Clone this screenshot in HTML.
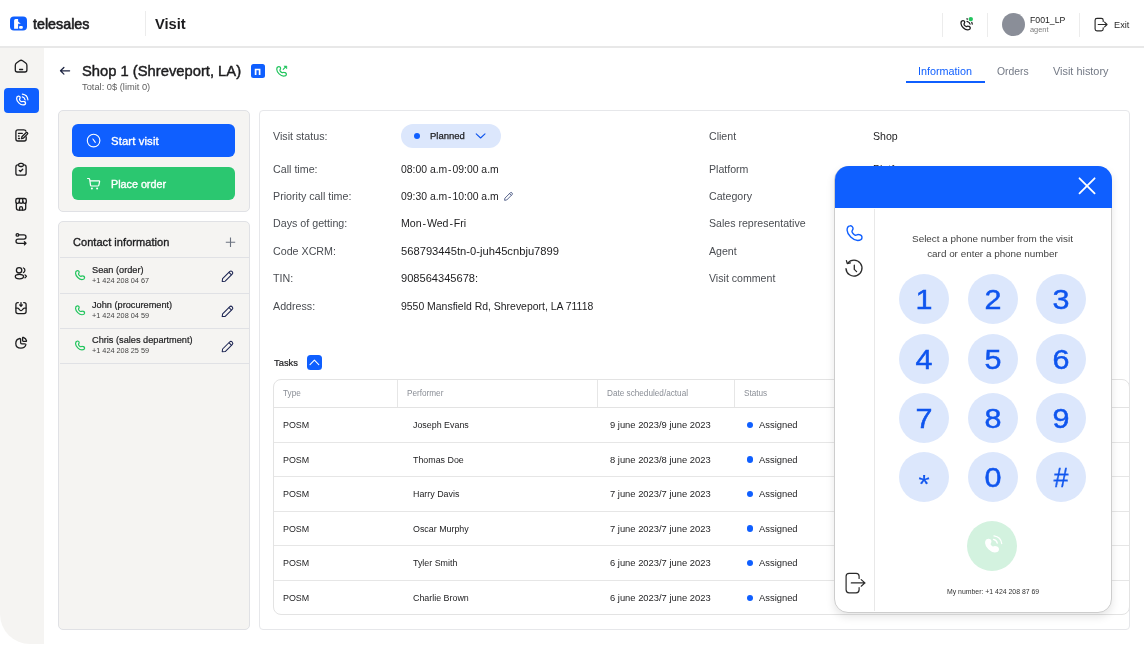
<!DOCTYPE html>
<html><head><meta charset="utf-8">
<style>
*{margin:0;padding:0;box-sizing:border-box}
html,body{width:1144px;height:654px;overflow:hidden;background:#fff;font-family:"Liberation Sans",sans-serif;color:#1d1d1f}
.t{will-change:transform}
.a{position:absolute}
.t{position:absolute;line-height:1;white-space:nowrap}
svg{position:absolute;overflow:visible}
</style></head><body>
<div class="a" style="left:0px;top:46px;width:1144px;height:1.5px;background:#e8e8e8;"></div>
<svg style="left:10px;top:16px" width="17" height="15" viewBox="10 16 17 15" fill="none" ><rect x="10" y="16.6" width="17" height="14" rx="4" fill="#0f5fff"/><path d="M14.1 28.8V20.6Q14.1 19.1 15.6 19.1H18.1V21.4L20.8 23.8H18.1V28.8Z" fill="#fff"/><rect x="19.1" y="26" width="3.7" height="2.8" rx="1" fill="#fff"/></svg>
<div class="t" style="left:33.2px;top:17.00px;font-size:14.3px;color:#1d1d1f;-webkit-text-stroke:0.6px #1d1d1f;">telesales</div>
<div class="a" style="left:145px;top:11px;width:1px;height:25px;background:#ececec;"></div>
<div class="t" style="left:155px;top:17.00px;font-size:14.7px;color:#1d1d1f;font-weight:bold;">Visit</div>
<div class="a" style="left:942px;top:12.5px;width:1px;height:24.5px;background:#ececec;"></div>
<div class="a" style="left:987px;top:12.5px;width:1px;height:24.5px;background:#ececec;"></div>
<div class="a" style="left:1079px;top:12.5px;width:1px;height:24.5px;background:#ececec;"></div>
<svg style="left:954px;top:12px" width="26" height="24" viewBox="954 12 26 24" fill="none" ><path d="M3.6 1.0C5.2 0.6 6.6 2.0 6.6 3.4C6.6 4.6 5.6 5.2 5.6 6.2C5.6 7.4 7.6 9.6 9.0 9.8C10.0 9.9 10.6 9.0 11.8 9.2C13.4 9.4 15.2 10.6 15.0 12.4C14.8 14.2 13.0 14.8 11.0 14.8C6.6 14.8 1.2 9.4 1.0 5.2C0.9 3.0 2.0 1.3 3.6 1.0Z" transform="translate(960.330 20.029) scale(0.6608)" stroke="#1d1d1f" stroke-width="1.892" fill="none"/><path d="M967 21.3Q969.6 21.9 970.1 24.2M966.8 18.9Q971.6 19.5 972.3 24.1" stroke="#1d1d1f" stroke-width="1.2" stroke-linecap="round"/><circle cx="970.8" cy="19.1" r="2.9" fill="#fff"/><circle cx="970.8" cy="19.1" r="2.2" fill="#22c55e"/></svg>
<div class="a" style="left:1002px;top:13px;width:23px;height:23px;background:#8a8e98;border-radius:50%"></div>
<div class="t" style="left:1030px;top:16.00px;font-size:8.7px;color:#222;">F001_LP</div>
<div class="t" style="left:1030px;top:26.00px;font-size:7.4px;color:#7d7d7d;">agent</div>
<svg style="left:1092px;top:16px" width="18" height="17" viewBox="1092 16 18 17" fill="none" ><path d="M1103.2 21.4V20.2Q1103.2 18.3 1101.3 18.3H1097Q1095.1 18.3 1095.1 20.2V28.9Q1095.1 30.8 1097 30.8H1101.3Q1103.2 30.8 1103.2 28.9V27.7" stroke="#2a2a2a" stroke-width="1.15" stroke-linecap="round" stroke-linejoin="round"/><path d="M1098.2 24.5H1106.8M1104.6 22.1L1107 24.5L1104.6 26.9" stroke="#2a2a2a" stroke-width="1.15" stroke-linecap="round" stroke-linejoin="round"/></svg>
<div class="t" style="left:1113.6px;top:21.00px;font-size:9.2px;color:#2a2a2a;">Exit</div>
<div class="a" style="left:0px;top:48px;width:44px;height:596px;background:#f5f4f2;border-bottom-left-radius:30px"></div>
<div class="a" style="left:4px;top:88px;width:35px;height:25px;background:#0f5fff;border-radius:4px"></div>
<svg style="left:12px;top:57px" width="18" height="18" viewBox="12 57 18 18" fill="none" ><path d="M15.3 65.4Q15.3 63.9 16.5 63L19.6 60.8Q21.1 59.7 22.6 60.8L25.7 63Q26.9 63.9 26.9 65.4V70Q26.9 72 24.9 72H17.3Q15.3 72 15.3 70Z" stroke="#1d1d1f" stroke-width="1.3" stroke-linecap="round" stroke-linejoin="round"/><path d="M19.6 69.5H22.6" stroke="#1d1d1f" stroke-width="1.3" stroke-linecap="round" stroke-linejoin="round"/></svg>
<svg style="left:12px;top:91px" width="18" height="18" viewBox="12 91 18 18" fill="none" ><path d="M3.6 1.0C5.2 0.6 6.6 2.0 6.6 3.4C6.6 4.6 5.6 5.2 5.6 6.2C5.6 7.4 7.6 9.6 9.0 9.8C10.0 9.9 10.6 9.0 11.8 9.2C13.4 9.4 15.2 10.6 15.0 12.4C14.8 14.2 13.0 14.8 11.0 14.8C6.6 14.8 1.2 9.4 1.0 5.2C0.9 3.0 2.0 1.3 3.6 1.0Z" transform="translate(15.949 95.445) scale(0.6396)" stroke="#fff" stroke-width="1.954" fill="none"/><path d="M22.3 96.9Q24.6 97.4 25.1 99.8M22.4 94.2Q27.3 94.8 27.9 99.8" stroke="#fff" stroke-width="1.2" stroke-linecap="round"/></svg>
<svg style="left:12px;top:126px" width="18" height="18" viewBox="12 126 18 18" fill="none" ><path d="M26.2 136.8V139Q26.2 141 24.2 141H17.9Q15.9 141 15.9 139V131.8Q15.9 129.8 17.9 129.8H23.8Q25.6 129.8 26 131.2" stroke="#1d1d1f" stroke-width="1.3" stroke-linecap="round" stroke-linejoin="round"/><path d="M18.5 133.4H22.3M18.5 136H19.1M18.5 138.5H19.6" stroke="#1d1d1f" stroke-width="1.3" stroke-linecap="round" stroke-linejoin="round"/><path d="M21.6 138.7L21.9 136.8L26 132.7Q26.7 132 27.4 132.7Q28.1 133.4 27.4 134.1L23.3 138.2Z" stroke="#1d1d1f" stroke-width="1.3" stroke-linecap="round" stroke-linejoin="round"/></svg>
<svg style="left:12px;top:160px" width="18" height="18" viewBox="12 160 18 18" fill="none" ><path d="M18.4 164.9H17.9Q15.9 164.9 15.9 166.9V173.2Q15.9 175.2 17.9 175.2H24.1Q26.1 175.2 26.1 173.2V166.9Q26.1 164.9 24.1 164.9H23.6" stroke="#1d1d1f" stroke-width="1.3" stroke-linecap="round" stroke-linejoin="round"/><rect x="18.6" y="163.4" width="4.8" height="3.1" rx="1.5" stroke="#1d1d1f" stroke-width="1.3" stroke-linecap="round" stroke-linejoin="round"/><path d="M19.3 170.4L20.5 171.5L22.7 169.2" stroke="#1d1d1f" stroke-width="1.3" stroke-linecap="round" stroke-linejoin="round"/></svg>
<svg style="left:12px;top:195px" width="18" height="18" viewBox="12 195 18 18" fill="none" ><path d="M15.8 201.4Q15.8 203.4 17.5 203.4Q19.2 203.4 19.3 201.4Q19.4 203.4 21.1 203.4Q22.8 203.4 22.9 201.4Q23 203.4 24.7 203.4Q26.3 203.4 26.3 201.4V200.2Q26.3 198.5 24.6 198.5H17.5Q15.8 198.5 15.8 200.2Z" stroke="#1d1d1f" stroke-width="1.3" stroke-linecap="round" stroke-linejoin="round"/><path d="M19.3 201.4L19.6 198.6M22.9 201.4L22.6 198.6" stroke="#1d1d1f" stroke-width="1.3" stroke-linecap="round" stroke-linejoin="round"/><path d="M16.4 203.2V208Q16.4 210.1 18.4 210.1H23.7Q25.7 210.1 25.7 208V203.2" stroke="#1d1d1f" stroke-width="1.3" stroke-linecap="round" stroke-linejoin="round"/><path d="M19.6 210V208.1Q19.6 206.7 21.05 206.7Q22.5 206.7 22.5 208.1V210" stroke="#1d1d1f" stroke-width="1.3" stroke-linecap="round" stroke-linejoin="round"/></svg>
<svg style="left:12px;top:230px" width="18" height="18" viewBox="12 230 18 18" fill="none" ><circle cx="17.4" cy="234.9" r="1.3" stroke="#1d1d1f" stroke-width="1.3" stroke-linecap="round" stroke-linejoin="round"/><path d="M18.9 234.9H23.9Q26 234.9 26 237Q26 239.1 23.9 239.1H18.1Q16 239.1 16 241.2Q16 243.3 18.1 243.3H25.9M24.4 241.7L26 243.3L24.4 244.9" stroke="#1d1d1f" stroke-width="1.3" stroke-linecap="round" stroke-linejoin="round"/></svg>
<svg style="left:12px;top:264px" width="18" height="18" viewBox="12 264 18 18" fill="none" ><circle cx="19.1" cy="270.3" r="2.7" stroke="#1d1d1f" stroke-width="1.3" stroke-linecap="round" stroke-linejoin="round"/><path d="M23.4 268Q24.9 268.5 24.9 270.3Q24.9 272.1 23.4 272.6" stroke="#1d1d1f" stroke-width="1.3" stroke-linecap="round" stroke-linejoin="round"/><ellipse cx="19.4" cy="276.6" rx="4.1" ry="2.2" stroke="#1d1d1f" stroke-width="1.3" stroke-linecap="round" stroke-linejoin="round"/><path d="M25 274.9L26.4 276.3L25 277.7" stroke="#1d1d1f" stroke-width="1.3" stroke-linecap="round" stroke-linejoin="round"/></svg>
<svg style="left:12px;top:299px" width="18" height="18" viewBox="12 299 18 18" fill="none" ><path d="M18.3 302.6H17.9Q15.9 302.6 15.9 304.6V311.6Q15.9 313.6 17.9 313.6H24.1Q26.1 313.6 26.1 311.6V304.6Q26.1 302.6 24.1 302.6H23.7" stroke="#1d1d1f" stroke-width="1.3" stroke-linecap="round" stroke-linejoin="round"/><path d="M21 302.7V306.1M19.7 304.9L21 306.2L22.3 304.9" stroke="#1d1d1f" stroke-width="1.3" stroke-linecap="round" stroke-linejoin="round"/><path d="M16 308.1H17.5Q18.2 308.1 18.7 308.7L20 310.1Q21 311.1 22 310.1L23.3 308.7Q23.8 308.1 24.5 308.1H26" stroke="#1d1d1f" stroke-width="1.3" stroke-linecap="round" stroke-linejoin="round"/></svg>
<svg style="left:12px;top:333px" width="18" height="18" viewBox="12 333 18 18" fill="none" ><path d="M19.8 338.5Q15.8 339.2 15.8 343.4Q15.8 348.1 20.9 348.1Q25 348.1 25.8 344.9Q26 343.8 24.8 343.8H21.8Q20.6 343.8 20.6 342.6V339.2Q20.6 338.4 19.8 338.5Z" stroke="#1d1d1f" stroke-width="1.3" stroke-linecap="round" stroke-linejoin="round"/><path d="M22.6 337.9V340.6Q22.6 341.4 23.4 341.4H25.9Q26.6 341.4 26.5 340.7Q26 338.4 23.4 337.4Q22.6 337.1 22.6 337.9Z" stroke="#1d1d1f" stroke-width="1.3" stroke-linecap="round" stroke-linejoin="round"/></svg>
<svg style="left:57px;top:64px" width="15" height="14" viewBox="57 64 15 14" fill="none" ><path d="M60.8 70.8H69.6M63.9 67.5L60.5 70.8L63.9 74.1" stroke="#1c2340" stroke-width="1.25" stroke-linecap="round" stroke-linejoin="round"/></svg>
<div class="t" style="left:82.3px;top:64.00px;font-size:14.75px;color:#1d1d1f;-webkit-text-stroke:0.45px #1d1d1f;">Shop 1 (Shreveport, LA)</div>
<div class="t" style="left:82.3px;top:83.00px;font-size:9.3px;color:#5f5f5f;">Total: 0$ (limit 0)</div>
<div class="a" style="left:250.6px;top:63.8px;width:14.3px;height:13.9px;background:#0f5fff;border-radius:2.5px"></div>
<svg style="left:250px;top:63px" width="16" height="16" viewBox="250 63 16 16" fill="none" ><path d="M255.6 74.9V69.5H259.6V74.9" stroke="#fff" stroke-width="1.7"/></svg>
<svg style="left:272px;top:62px" width="18" height="17" viewBox="272 62 18 17" fill="none" ><path d="M3.6 1.0C5.2 0.6 6.6 2.0 6.6 3.4C6.6 4.6 5.6 5.2 5.6 6.2C5.6 7.4 7.6 9.6 9.0 9.8C10.0 9.9 10.6 9.0 11.8 9.2C13.4 9.4 15.2 10.6 15.0 12.4C14.8 14.2 13.0 14.8 11.0 14.8C6.6 14.8 1.2 9.4 1.0 5.2C0.9 3.0 2.0 1.3 3.6 1.0Z" transform="translate(276.083 65.986) scale(0.6855)" stroke="#22c55e" stroke-width="1.751" fill="none"/><path d="M283.2 69.4L285.4 67.2" stroke="#22c55e" stroke-width="1.1" stroke-linecap="round"/><path d="M283.9 66H286.8V68.9Z" fill="#22c55e" stroke="#22c55e" stroke-width="0.5" stroke-linejoin="round"/></svg>
<div class="t" style="left:918.3px;top:66.00px;font-size:10.8px;color:#0f5fff;">Information</div>
<div class="t" style="left:996.7px;top:67.00px;font-size:10.4px;color:#737985;">Orders</div>
<div class="t" style="left:1052.8px;top:66.00px;font-size:10.9px;color:#737985;">Visit history</div>
<div class="a" style="left:906px;top:81.2px;width:79px;height:1.8px;background:#0f5fff;"></div>
<div class="a" style="left:58px;top:110px;width:192px;height:102px;background:#f5f4f2;border:1px solid #e0e1e5;border-radius:5px"></div>
<div class="a" style="left:72px;top:124px;width:163px;height:33px;background:#0f5fff;border-radius:6px"></div>
<svg style="left:85px;top:132px" width="18" height="18" viewBox="85 132 18 18" fill="none" ><circle cx="93.6" cy="140.6" r="6.3" stroke="#fff" stroke-width="1.1"/><path d="M92.9 139L95.3 142.4" stroke="#fff" stroke-width="1.1" stroke-linecap="round"/></svg>
<div class="t" style="left:110.6px;top:136.00px;font-size:11.3px;color:#fff;-webkit-text-stroke:0.35px #fff;letter-spacing:0.12px;">Start visit</div>
<div class="a" style="left:72px;top:167px;width:163px;height:33px;background:#2bc770;border-radius:6px"></div>
<svg style="left:85px;top:175px" width="18" height="18" viewBox="85 175 18 18" fill="none" ><path d="M87.6 178.5H88.6Q89.5 178.5 89.7 179.4L90.5 185.2Q90.6 186 91.4 186H97.9Q98.6 186 98.8 185.3L99.6 181.6Q99.7 180.8 98.9 180.8H90" stroke="#fff" stroke-width="1.2" stroke-linecap="round" stroke-linejoin="round"/><circle cx="91.9" cy="188.6" r="1" fill="#fff"/><circle cx="97.1" cy="188.6" r="1" fill="#fff"/></svg>
<div class="t" style="left:110.6px;top:179.00px;font-size:10.75px;color:#fff;-webkit-text-stroke:0.35px #fff;">Place order</div>
<div class="a" style="left:58px;top:221px;width:192px;height:409px;background:#f5f4f2;border:1px solid #e0e1e5;border-radius:5px"></div>
<div class="t" style="left:72.5px;top:237.00px;font-size:11px;color:#1d1d1f;-webkit-text-stroke:0.35px #1d1d1f;letter-spacing:0.05px;">Contact information</div>
<svg style="left:224px;top:236px" width="13" height="13" viewBox="224 236 13 13" fill="none" ><path d="M230.5 237.5V247M225.8 242.2H235.2" stroke="#6b7280" stroke-width="1.1"/></svg>
<div class="a" style="left:59.5px;top:257px;width:189px;height:1px;background:#e0e1e5;"></div>
<div class="a" style="left:59.5px;top:293px;width:189px;height:1px;background:#e0e1e5;"></div>
<div class="a" style="left:59.5px;top:328px;width:189px;height:1px;background:#e0e1e5;"></div>
<div class="a" style="left:59.5px;top:363px;width:189px;height:1px;background:#e0e1e5;"></div>
<div class="t" style="left:92.3px;top:266.00px;font-size:9.2px;color:#1d1d1f;-webkit-text-stroke:0.2px #1d1d1f;">Sean (order)</div>
<div class="t" style="left:92.3px;top:277.00px;font-size:7.3px;color:#444;">+1 424 208 04 67</div>
<svg style="left:72px;top:267px" width="16" height="16" viewBox="72 267 16 16" fill="none" ><path d="M3.6 1.0C5.2 0.6 6.6 2.0 6.6 3.4C6.6 4.6 5.6 5.2 5.6 6.2C5.6 7.4 7.6 9.6 9.0 9.8C10.0 9.9 10.6 9.0 11.8 9.2C13.4 9.4 15.2 10.6 15.0 12.4C14.8 14.2 13.0 14.8 11.0 14.8C6.6 14.8 1.2 9.4 1.0 5.2C0.9 3.0 2.0 1.3 3.6 1.0Z" transform="translate(74.921 270.018) scale(0.6431)" stroke="#22c55e" stroke-width="1.866" fill="none"/></svg>
<svg style="left:219px;top:266px" width="18" height="18" viewBox="219 266 18 18" fill="none" ><path d="M222.2 281.4L222.6 278.6L229.6 271.6Q230.9 270.3 232.2 271.6Q233.5 272.9 232.2 274.2L225.2 281.2Z" stroke="#1c2452" stroke-width="1.05" stroke-linejoin="round"/><path d="M228.9 272.3L231.5 274.9" stroke="#1c2452" stroke-width="1.05"/></svg>
<div class="t" style="left:92.3px;top:301.00px;font-size:9.2px;color:#1d1d1f;-webkit-text-stroke:0.2px #1d1d1f;">John (procurement)</div>
<div class="t" style="left:92.3px;top:312.00px;font-size:7.3px;color:#444;">+1 424 208 04 59</div>
<svg style="left:72px;top:302px" width="16" height="16" viewBox="72 302 16 16" fill="none" ><path d="M3.6 1.0C5.2 0.6 6.6 2.0 6.6 3.4C6.6 4.6 5.6 5.2 5.6 6.2C5.6 7.4 7.6 9.6 9.0 9.8C10.0 9.9 10.6 9.0 11.8 9.2C13.4 9.4 15.2 10.6 15.0 12.4C14.8 14.2 13.0 14.8 11.0 14.8C6.6 14.8 1.2 9.4 1.0 5.2C0.9 3.0 2.0 1.3 3.6 1.0Z" transform="translate(74.921 305.218) scale(0.6431)" stroke="#22c55e" stroke-width="1.866" fill="none"/></svg>
<svg style="left:219px;top:301px" width="18" height="18" viewBox="219 301 18 18" fill="none" ><path d="M222.2 316.6L222.6 313.8L229.6 306.8Q230.9 305.5 232.2 306.8Q233.5 308.1 232.2 309.4L225.2 316.4Z" stroke="#1c2452" stroke-width="1.05" stroke-linejoin="round"/><path d="M228.9 307.5L231.5 310.1" stroke="#1c2452" stroke-width="1.05"/></svg>
<div class="t" style="left:92.3px;top:336.00px;font-size:9.2px;color:#1d1d1f;-webkit-text-stroke:0.2px #1d1d1f;">Chris (sales department)</div>
<div class="t" style="left:92.3px;top:347.00px;font-size:7.3px;color:#444;">+1 424 208 25 59</div>
<svg style="left:72px;top:337px" width="16" height="16" viewBox="72 337 16 16" fill="none" ><path d="M3.6 1.0C5.2 0.6 6.6 2.0 6.6 3.4C6.6 4.6 5.6 5.2 5.6 6.2C5.6 7.4 7.6 9.6 9.0 9.8C10.0 9.9 10.6 9.0 11.8 9.2C13.4 9.4 15.2 10.6 15.0 12.4C14.8 14.2 13.0 14.8 11.0 14.8C6.6 14.8 1.2 9.4 1.0 5.2C0.9 3.0 2.0 1.3 3.6 1.0Z" transform="translate(74.921 340.418) scale(0.6431)" stroke="#22c55e" stroke-width="1.866" fill="none"/></svg>
<svg style="left:219px;top:336px" width="18" height="18" viewBox="219 336 18 18" fill="none" ><path d="M222.2 351.8L222.6 349.0L229.6 342.0Q230.9 340.7 232.2 342.0Q233.5 343.3 232.2 344.6L225.2 351.6Z" stroke="#1c2452" stroke-width="1.05" stroke-linejoin="round"/><path d="M228.9 342.7L231.5 345.3" stroke="#1c2452" stroke-width="1.05"/></svg>
<div class="a" style="left:259px;top:110px;width:871px;height:520px;background:#fff;border:1px solid #e6e7ea;border-radius:4px"></div>
<div class="t" style="left:273.4px;top:131.00px;font-size:10.7px;color:#4a4d52;">Visit status:</div>
<div class="t" style="left:273.4px;top:164.00px;font-size:10.7px;color:#4a4d52;">Call time:</div>
<div class="t" style="left:273.4px;top:191.00px;font-size:10.7px;color:#4a4d52;">Priority call time:</div>
<div class="t" style="left:273.4px;top:218.00px;font-size:10.7px;color:#4a4d52;">Days of getting:</div>
<div class="t" style="left:273.4px;top:246.00px;font-size:10.7px;color:#4a4d52;">Code XCRM:</div>
<div class="t" style="left:273.4px;top:273.00px;font-size:10.7px;color:#4a4d52;">TIN:</div>
<div class="t" style="left:273.4px;top:301.00px;font-size:10.7px;color:#4a4d52;">Address:</div>
<div class="t" style="left:401px;top:165.00px;font-size:10.4px;color:#1d1d1f;">08:00 a.m<span style="margin:0 0.9px">-</span>09:00 a.m</div>
<div class="t" style="left:401px;top:192.00px;font-size:10.4px;color:#1d1d1f;">09:30 a.m<span style="margin:0 0.9px">-</span>10:00 a.m</div>
<div class="t" style="left:401px;top:218.00px;font-size:10.6px;color:#1d1d1f;">Mon<span style="margin:0 0.9px">-</span>Wed<span style="margin:0 0.9px">-</span>Fri</div>
<div class="t" style="left:401px;top:246.00px;font-size:11.2px;color:#1d1d1f;">568793445tn-0-juh45cnbju7899</div>
<div class="t" style="left:401px;top:273.00px;font-size:11.1px;color:#1d1d1f;">908564345678:</div>
<div class="t" style="left:401px;top:302.00px;font-size:10.45px;color:#1d1d1f;">9550 Mansfield Rd, Shreveport, LA 71118</div>
<div class="t" style="left:708.6px;top:131.00px;font-size:10.6px;color:#4a4d52;">Client</div>
<div class="t" style="left:708.6px;top:164.00px;font-size:10.6px;color:#4a4d52;">Platform</div>
<div class="t" style="left:708.6px;top:191.00px;font-size:10.6px;color:#4a4d52;">Category</div>
<div class="t" style="left:708.6px;top:218.00px;font-size:10.6px;color:#4a4d52;">Sales representative</div>
<div class="t" style="left:708.6px;top:246.00px;font-size:10.6px;color:#4a4d52;">Agent</div>
<div class="t" style="left:708.6px;top:273.00px;font-size:10.6px;color:#4a4d52;">Visit comment</div>
<div class="t" style="left:873.3px;top:131.00px;font-size:10.6px;color:#1d1d1f;">Shop</div>
<div class="t" style="left:873.3px;top:164.00px;font-size:10.6px;color:#1d1d1f;">Platform</div>
<div class="a" style="left:401px;top:124px;width:100px;height:24px;background:#dce7fc;border-radius:12px"></div>
<div class="a" style="left:413.8px;top:132.8px;width:6.2px;height:6.2px;background:#0f5fff;border-radius:50%"></div>
<div class="t" style="left:429.6px;top:131.00px;font-size:9.5px;color:#1d1d1f;-webkit-text-stroke:0.25px #1d1d1f;">Planned</div>
<svg style="left:474px;top:131px" width="13" height="9" viewBox="474 131 13 9" fill="none" ><path d="M476.2 133.8L480.6 138L485 133.8" stroke="#0f55ee" stroke-width="1.1" stroke-linecap="round" stroke-linejoin="round"/></svg>
<svg style="left:502px;top:190px" width="13" height="12" viewBox="502 190 13 12" fill="none" ><path d="M504.6 200.3L504.9 198.2L510.2 192.9Q511.1 192 512 192.9Q512.9 193.8 512 194.7L506.7 200Z" stroke="#3b4a7a" stroke-width="0.85" stroke-linejoin="round"/><path d="M509.5 193.6L511.3 195.4" stroke="#3b4a7a" stroke-width="0.85"/></svg>
<div class="t" style="left:273.5px;top:358.00px;font-size:9.4px;color:#1d1d1f;-webkit-text-stroke:0.2px #1d1d1f;">Tasks</div>
<div class="a" style="left:307.2px;top:355.2px;width:14.5px;height:14.5px;background:#0f5fff;border-radius:3.5px"></div>
<svg style="left:306px;top:354px" width="17" height="17" viewBox="306 354 17 17" fill="none" ><path d="M310 364.6L314.4 360.2L318.8 364.6" stroke="#fff" stroke-width="1.1" stroke-linecap="round" stroke-linejoin="round"/></svg>
<div class="a" style="left:273px;top:379px;width:857px;height:236px;background:#fff;border:1px solid #e3e3e3;border-radius:8px"></div>
<div class="a" style="left:274px;top:407px;width:855px;height:1px;background:#e3e3e3;"></div>
<div class="a" style="left:274px;top:442px;width:855px;height:1px;background:#e6e6e6;"></div>
<div class="a" style="left:274px;top:476px;width:855px;height:1px;background:#e6e6e6;"></div>
<div class="a" style="left:274px;top:511px;width:855px;height:1px;background:#e6e6e6;"></div>
<div class="a" style="left:274px;top:545px;width:855px;height:1px;background:#e6e6e6;"></div>
<div class="a" style="left:274px;top:580px;width:855px;height:1px;background:#e6e6e6;"></div>
<div class="a" style="left:397px;top:380px;width:1px;height:27px;background:#e6e6e6;"></div>
<div class="a" style="left:597px;top:380px;width:1px;height:27px;background:#e6e6e6;"></div>
<div class="a" style="left:734px;top:380px;width:1px;height:27px;background:#e6e6e6;"></div>
<div class="t" style="left:283.2px;top:390.00px;font-size:8.2px;color:#8a8e96;">Type</div>
<div class="t" style="left:406.9px;top:390.00px;font-size:8.2px;color:#8a8e96;">Performer</div>
<div class="t" style="left:606.6px;top:390.00px;font-size:8.2px;color:#8a8e96;">Date scheduled/actual</div>
<div class="t" style="left:743.9px;top:390.00px;font-size:8.2px;color:#8a8e96;">Status</div>
<div class="t" style="left:283.2px;top:421.00px;font-size:8.9px;color:#1d1d1f;">POSM</div>
<div class="t" style="left:413px;top:421.00px;font-size:8.9px;color:#1d1d1f;">Joseph Evans</div>
<div class="t" style="left:609.7px;top:420.00px;font-size:9.4px;color:#1d1d1f;">9 june 2023/9 june 2023</div>
<div class="a" style="left:746.6px;top:421.8px;width:6.2px;height:6.2px;background:#0f5fff;border-radius:50%"></div>
<div class="t" style="left:758.5px;top:420.00px;font-size:9.4px;color:#1d1d1f;">Assigned</div>
<div class="t" style="left:283.2px;top:456.00px;font-size:8.9px;color:#1d1d1f;">POSM</div>
<div class="t" style="left:413px;top:456.00px;font-size:8.9px;color:#1d1d1f;">Thomas Doe</div>
<div class="t" style="left:609.7px;top:455.00px;font-size:9.4px;color:#1d1d1f;">8 june 2023/8 june 2023</div>
<div class="a" style="left:746.6px;top:456.35px;width:6.2px;height:6.2px;background:#0f5fff;border-radius:50%"></div>
<div class="t" style="left:758.5px;top:455.00px;font-size:9.4px;color:#1d1d1f;">Assigned</div>
<div class="t" style="left:283.2px;top:490.00px;font-size:8.9px;color:#1d1d1f;">POSM</div>
<div class="t" style="left:413px;top:490.00px;font-size:8.9px;color:#1d1d1f;">Harry Davis</div>
<div class="t" style="left:609.7px;top:489.00px;font-size:9.4px;color:#1d1d1f;">7 june 2023/7 june 2023</div>
<div class="a" style="left:746.6px;top:490.9px;width:6.2px;height:6.2px;background:#0f5fff;border-radius:50%"></div>
<div class="t" style="left:758.5px;top:489.00px;font-size:9.4px;color:#1d1d1f;">Assigned</div>
<div class="t" style="left:283.2px;top:525.00px;font-size:8.9px;color:#1d1d1f;">POSM</div>
<div class="t" style="left:413px;top:525.00px;font-size:8.9px;color:#1d1d1f;">Oscar Murphy</div>
<div class="t" style="left:609.7px;top:524.00px;font-size:9.4px;color:#1d1d1f;">7 june 2023/7 june 2023</div>
<div class="a" style="left:746.6px;top:525.45px;width:6.2px;height:6.2px;background:#0f5fff;border-radius:50%"></div>
<div class="t" style="left:758.5px;top:524.00px;font-size:9.4px;color:#1d1d1f;">Assigned</div>
<div class="t" style="left:283.2px;top:559.00px;font-size:8.9px;color:#1d1d1f;">POSM</div>
<div class="t" style="left:413px;top:559.00px;font-size:8.9px;color:#1d1d1f;">Tyler Smith</div>
<div class="t" style="left:609.7px;top:558.00px;font-size:9.4px;color:#1d1d1f;">6 june 2023/7 june 2023</div>
<div class="a" style="left:746.6px;top:560.0px;width:6.2px;height:6.2px;background:#0f5fff;border-radius:50%"></div>
<div class="t" style="left:758.5px;top:558.00px;font-size:9.4px;color:#1d1d1f;">Assigned</div>
<div class="t" style="left:283.2px;top:594.00px;font-size:8.9px;color:#1d1d1f;">POSM</div>
<div class="t" style="left:413px;top:594.00px;font-size:8.9px;color:#1d1d1f;">Charlie Brown</div>
<div class="t" style="left:609.7px;top:593.00px;font-size:9.4px;color:#1d1d1f;">6 june 2023/7 june 2023</div>
<div class="a" style="left:746.6px;top:594.55px;width:6.2px;height:6.2px;background:#0f5fff;border-radius:50%"></div>
<div class="t" style="left:758.5px;top:593.00px;font-size:9.4px;color:#1d1d1f;">Assigned</div>
<div class="a" style="left:834px;top:166px;width:278px;height:447px;background:#fff;border:1px solid #cdcdcd;border-radius:14px;box-shadow:0 4px 8px rgba(0,0,0,0.10);overflow:hidden"><div class="a" style="left:39px;top:42px;width:1px;height:402px;background:#e8e8e8"></div></div>
<div class="a" style="left:835px;top:166px;width:277px;height:42px;background:#0f5fff;border-radius:14px 14px 0 0"></div>
<svg style="left:1076px;top:175px" width="22" height="22" viewBox="1076 175 22 22" fill="none" ><path d="M1079.5 178.3L1094.6 193.4M1094.6 178.3L1079.5 193.4" stroke="#fff" stroke-width="1.8" stroke-linecap="round"/></svg>
<svg style="left:843px;top:222px" width="22" height="22" viewBox="843 222 22 22" fill="none" ><path d="M3.6 1.0C5.2 0.6 6.6 2.0 6.6 3.4C6.6 4.6 5.6 5.2 5.6 6.2C5.6 7.4 7.6 9.6 9.0 9.8C10.0 9.9 10.6 9.0 11.8 9.2C13.4 9.4 15.2 10.6 15.0 12.4C14.8 14.2 13.0 14.8 11.0 14.8C6.6 14.8 1.2 9.4 1.0 5.2C0.9 3.0 2.0 1.3 3.6 1.0Z" transform="translate(846.046 224.805) scale(1.0601)" stroke="#0f5fff" stroke-width="1.321" fill="none"/></svg>
<svg style="left:842px;top:257px" width="24" height="24" viewBox="842 257 24 24" fill="none" ><path d="M847.6 263.3A8 8 0 1 1 846 268.6" stroke="#2a2a2a" stroke-width="1.3" stroke-linecap="round"/><path d="M846.4 260.6L847.3 263.6L850.4 262.9" stroke="#2a2a2a" stroke-width="1.3" stroke-linecap="round" stroke-linejoin="round"/><path d="M854.3 265.2V269.4L856.6 271.6" stroke="#2a2a2a" stroke-width="1.3" stroke-linecap="round" stroke-linejoin="round"/></svg>
<div class="t" style="left:874px;top:232.4px;width:237px;text-align:center;font-size:9.9px;line-height:14.7px;color:#3f3f3f;white-space:normal">Select a phone number from the visit<br>card or enter a phone number</div>
<div class="a" style="left:899px;top:274.4px;width:50px;height:50px;background:#dce7fc;border-radius:50%"></div>
<div class="t" style="left:899px;top:286.4px;width:50px;text-align:center;font-size:27px;line-height:28px;color:#0f55ee;-webkit-text-stroke:0.45px #0f55ee;transform:scaleX(1.13)">1</div>
<div class="a" style="left:967.5px;top:274.4px;width:50px;height:50px;background:#dce7fc;border-radius:50%"></div>
<div class="t" style="left:967.5px;top:286.4px;width:50px;text-align:center;font-size:27px;line-height:28px;color:#0f55ee;-webkit-text-stroke:0.45px #0f55ee;transform:scaleX(1.13)">2</div>
<div class="a" style="left:1036px;top:274.4px;width:50px;height:50px;background:#dce7fc;border-radius:50%"></div>
<div class="t" style="left:1036px;top:286.4px;width:50px;text-align:center;font-size:27px;line-height:28px;color:#0f55ee;-webkit-text-stroke:0.45px #0f55ee;transform:scaleX(1.13)">3</div>
<div class="a" style="left:899px;top:333.7px;width:50px;height:50px;background:#dce7fc;border-radius:50%"></div>
<div class="t" style="left:899px;top:345.7px;width:50px;text-align:center;font-size:27px;line-height:28px;color:#0f55ee;-webkit-text-stroke:0.45px #0f55ee;transform:scaleX(1.13)">4</div>
<div class="a" style="left:967.5px;top:333.7px;width:50px;height:50px;background:#dce7fc;border-radius:50%"></div>
<div class="t" style="left:967.5px;top:345.7px;width:50px;text-align:center;font-size:27px;line-height:28px;color:#0f55ee;-webkit-text-stroke:0.45px #0f55ee;transform:scaleX(1.13)">5</div>
<div class="a" style="left:1036px;top:333.7px;width:50px;height:50px;background:#dce7fc;border-radius:50%"></div>
<div class="t" style="left:1036px;top:345.7px;width:50px;text-align:center;font-size:27px;line-height:28px;color:#0f55ee;-webkit-text-stroke:0.45px #0f55ee;transform:scaleX(1.13)">6</div>
<div class="a" style="left:899px;top:393px;width:50px;height:50px;background:#dce7fc;border-radius:50%"></div>
<div class="t" style="left:899px;top:405px;width:50px;text-align:center;font-size:27px;line-height:28px;color:#0f55ee;-webkit-text-stroke:0.45px #0f55ee;transform:scaleX(1.13)">7</div>
<div class="a" style="left:967.5px;top:393px;width:50px;height:50px;background:#dce7fc;border-radius:50%"></div>
<div class="t" style="left:967.5px;top:405px;width:50px;text-align:center;font-size:27px;line-height:28px;color:#0f55ee;-webkit-text-stroke:0.45px #0f55ee;transform:scaleX(1.13)">8</div>
<div class="a" style="left:1036px;top:393px;width:50px;height:50px;background:#dce7fc;border-radius:50%"></div>
<div class="t" style="left:1036px;top:405px;width:50px;text-align:center;font-size:27px;line-height:28px;color:#0f55ee;-webkit-text-stroke:0.45px #0f55ee;transform:scaleX(1.13)">9</div>
<div class="a" style="left:899px;top:452.3px;width:50px;height:50px;background:#dce7fc;border-radius:50%"></div>
<div class="t" style="left:899px;top:470.3px;width:50px;text-align:center;font-size:26px;line-height:28px;color:#0f55ee;-webkit-text-stroke:0.2px #0f55ee;transform:scaleX(1.1)">*</div>
<div class="a" style="left:967.5px;top:452.3px;width:50px;height:50px;background:#dce7fc;border-radius:50%"></div>
<div class="t" style="left:967.5px;top:464.3px;width:50px;text-align:center;font-size:27px;line-height:28px;color:#0f55ee;-webkit-text-stroke:0.45px #0f55ee;transform:scaleX(1.13)">0</div>
<div class="a" style="left:1036px;top:452.3px;width:50px;height:50px;background:#dce7fc;border-radius:50%"></div>
<div class="t" style="left:1036px;top:464.3px;width:50px;text-align:center;font-size:27px;line-height:28px;color:#0f55ee;-webkit-text-stroke:0.3px #0f55ee;transform:scaleX(0.98)">#</div>
<div class="a" style="left:967.4px;top:520.8px;width:50px;height:50px;background:#d3f2df;border-radius:50%"></div>
<svg style="left:982px;top:533px" width="24" height="24" viewBox="982 533 24 24" fill="none" ><path d="M3.6 1.0C5.2 0.6 6.6 2.0 6.6 3.4C6.6 4.6 5.6 5.2 5.6 6.2C5.6 7.4 7.6 9.6 9.0 9.8C10.0 9.9 10.6 9.0 11.8 9.2C13.4 9.4 15.2 10.6 15.0 12.4C14.8 14.2 13.0 14.8 11.0 14.8C6.6 14.8 1.2 9.4 1.0 5.2C0.9 3.0 2.0 1.3 3.6 1.0Z" transform="translate(984.899 538.532) scale(0.8905)" stroke="#fff" stroke-width="1.572" fill="#fff"/><path d="M993.5 539.3Q996.7 540 997.3 543.2M994 535.9Q1000.8 536.9 1001.7 543.5" stroke="#fff" stroke-width="1.3" stroke-linecap="round"/></svg>
<div class="t" style="left:946.5px;top:589.00px;font-size:6.9px;color:#333;">My number: +1 424 208 87 69</div>
<svg style="left:843px;top:570px" width="25" height="25" viewBox="843 570 25 25" fill="none" ><path d="M859.1 578.5V576.3Q859.1 573.3 856.1 573.3H849.1Q846.1 573.3 846.1 576.3V589.8Q846.1 592.8 849.1 592.8H856.1Q859.1 592.8 859.1 589.8V587.5" stroke="#2a2a2a" stroke-width="1.2" stroke-linecap="round" stroke-linejoin="round"/><path d="M851.3 582.9H865M861.2 579.6L864.9 582.9L861.2 586.2" stroke="#2a2a2a" stroke-width="1.2" stroke-linecap="round" stroke-linejoin="round"/></svg>
</body></html>
